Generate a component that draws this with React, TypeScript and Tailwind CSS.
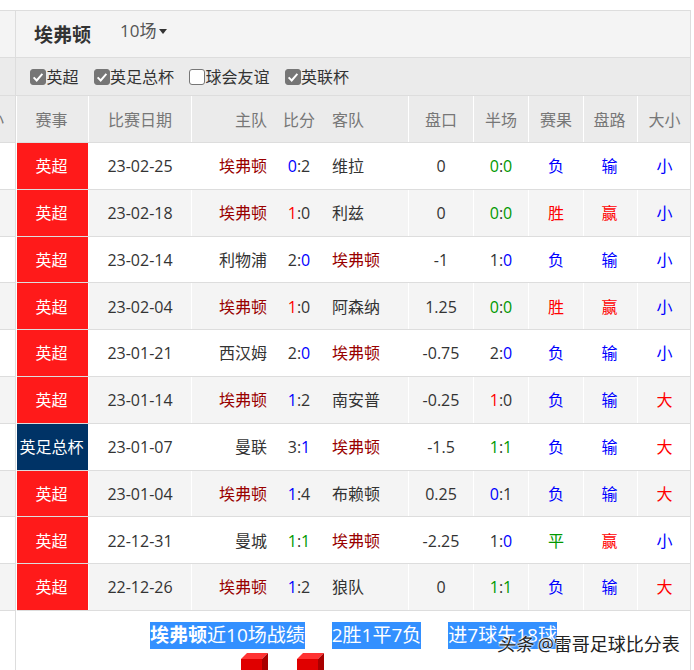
const FONT = "font-['Open_Sans','Noto_Sans_CJK_SC',sans-serif]";
const CELL = "flex items-center pt-[0.8px]";

type Part = { t: string; c?: string };
type Row = {
  league: string;
  date: string;
  home: string;
  score: Part[];
  away: string;
  line: string;
  half: Part[];
  result: Part;
  cover: Part;
  size: Part;
};

const RED = "text-[#ff0000]";
const BLUE = "text-[#0000ff]";
const GREEN = "text-[#009900]";
const TEAM = "埃弗顿";

const lose = (a: string, b: string, first = true): Part[] =>
  first
    ? [{ t: a, c: BLUE }, { t: ":" }, { t: b }]
    : [{ t: a }, { t: ":" }, { t: b, c: BLUE }];
const win = (a: string, b: string): Part[] => [{ t: a, c: RED }, { t: ":" }, { t: b }];
const draw = (a: string): Part[] => [{ t: a, c: GREEN }, { t: ":" }, { t: a, c: GREEN }];

const F: Part = { t: "负", c: BLUE };
const L: Part = { t: "输", c: BLUE };
const S: Part = { t: "小", c: BLUE };
const B: Part = { t: "大", c: RED };

const rows: Row[] = [
  { league: "英超", date: "23-02-25", home: TEAM, score: lose("0", "2"), away: "维拉", line: "0", half: draw("0"), result: F, cover: L, size: S },
  { league: "英超", date: "23-02-18", home: TEAM, score: win("1", "0"), away: "利兹", line: "0", half: draw("0"), result: { t: "胜", c: RED }, cover: { t: "赢", c: RED }, size: S },
  { league: "英超", date: "23-02-14", home: "利物浦", score: lose("2", "0", false), away: TEAM, line: "-1", half: lose("1", "0", false), result: F, cover: L, size: S },
  { league: "英超", date: "23-02-04", home: TEAM, score: win("1", "0"), away: "阿森纳", line: "1.25", half: draw("0"), result: { t: "胜", c: RED }, cover: { t: "赢", c: RED }, size: S },
  { league: "英超", date: "23-01-21", home: "西汉姆", score: lose("2", "0", false), away: TEAM, line: "-0.75", half: lose("2", "0", false), result: F, cover: L, size: S },
  { league: "英超", date: "23-01-14", home: TEAM, score: lose("1", "2"), away: "南安普", line: "-0.25", half: win("1", "0"), result: F, cover: L, size: B },
  { league: "英足总杯", date: "23-01-07", home: "曼联", score: lose("3", "1", false), away: TEAM, line: "-1.5", half: draw("1"), result: F, cover: L, size: B },
  { league: "英超", date: "23-01-04", home: TEAM, score: lose("1", "4"), away: "布赖顿", line: "0.25", half: lose("0", "1"), result: F, cover: L, size: B },
  { league: "英超", date: "22-12-31", home: "曼城", score: draw("1"), away: TEAM, line: "-2.25", half: lose("1", "0", false), result: { t: "平", c: GREEN }, cover: { t: "赢", c: RED }, size: S },
  { league: "英超", date: "22-12-26", home: TEAM, score: lose("1", "2"), away: "狼队", line: "0", half: draw("1"), result: F, cover: L, size: B },
];

const COLS = "grid grid-cols-[72px_103px_83px_48px_86px_65px_55px_55px_54px_53px]";

const Parts = ({ parts }: { parts: Part[] }) => (
  <>
    {parts.map((p, i) => (
      <span key={i} className={p.c}>
        {p.t}
      </span>
    ))}
  </>
);

const Check = ({ on, label }: { on: boolean; label: string }) => (
  <label className="flex items-center">
    <span
      className={`mr-[0.5px] flex h-4 w-4 items-center justify-center rounded-[3px] border ${
        on ? "border-[#767676] bg-[#767676]" : "border-[#767676] bg-white"
      }`}
    >
      {on && (
        <svg viewBox="0 0 16 16" className="h-[14px] w-[14px]">
          <path d="M3 8.5 L6.5 12 L13 4.5" fill="none" stroke="#fff" strokeWidth="2.2" />
        </svg>
      )}
    </span>
    {label}
  </label>
);

const Cube = () => (
  <svg viewBox="0 0 27 22" className="h-[22px] w-[27px]">
    <polygon points="0,6 6,0 27,0 21,6" fill="#ff3333" />
    <polygon points="21,6 27,0 27,22 21,22" fill="#a80000" />
    <rect x="0" y="6" width="21" height="16" fill="#e00000" />
  </svg>
);

const Head = ({ children, cls = "justify-center", line = true }: { children: string; cls?: string; line?: boolean }) => (
  <div className={`flex items-center pt-[2px] ${cls} ${line ? "border-r border-white" : ""}`}>{children}</div>
);

export default function App() {
  return (
    <div className={`${FONT} relative h-[670px] w-[694px] overflow-hidden bg-white pt-[10px] text-base text-[#333]`}>
      <div className="flex w-[691px] border-t border-[#dddddd]">
        {/* cut-off table on the left */}
        <div className="w-[15px] shrink-0">
          <div className="h-[46px] bg-[#f4f4f4]" />
          <div className="h-[39px] border-y border-[#dddddd] bg-[#ebebeb]" />
          <div className="flex h-[47px] items-center overflow-hidden border-b border-[#dddddd] bg-[#ebebeb] text-[#777]">
            <span className="-ml-[12px]">小</span>
          </div>
          {rows.map((r, i) => (
            <div key={r.date} className={`h-[46.8px] border-b border-[#dddddd] ${i % 2 ? "bg-[#f4f4f4]" : "bg-white"}`} />
          ))}
        </div>

        <div className="w-[676px] border-x border-[#dddddd] pl-px">
          {/* title bar */}
          <div className="-ml-px flex h-[46px] items-center bg-[#f4f4f4] pl-[18px]">
            <h2 className="mt-[2px] w-[86px] text-[19px] font-bold">埃弗顿</h2>
            <span className="mb-[6px] flex items-center text-[17px] text-[#555]">
              10场
              <span className="ml-[3px] h-0 w-0 border-x-[4.5px] border-t-[5px] border-x-transparent border-t-[#333]" />
            </span>
          </div>

          {/* competition filters */}
          <div className="-ml-px flex h-[39px] items-center gap-[15px] border-y border-[#dddddd] bg-[#ebebeb] pl-[14px] text-[#333]">
            <Check on label="英超" />
            <Check on label="英足总杯" />
            <Check on={false} label="球会友谊" />
            <Check on label="英联杯" />
          </div>

          {/* table head */}
          <div className={`${COLS} h-[47px] border-b border-[#dddddd] bg-[#ebebeb] text-[#777]`}>
            <Head cls="justify-center pr-[2px]">赛事</Head>
            <Head>比赛日期</Head>
            <Head cls="justify-end pr-2" line={false}>主队</Head>
            <Head line={false}>比分</Head>
            <Head cls="justify-start pl-[9px]">客队</Head>
            <Head>盘口</Head>
            <Head>半场</Head>
            <Head>赛果</Head>
            <Head cls="justify-center pr-[2px]">盘路</Head>
            <Head line={false}>大小</Head>
          </div>

          {/* match rows */}
          {rows.map((r, i) => (
            <div
              key={r.date}
              className={`${COLS} h-[46.8px] border-b border-[#dddddd] ${i % 2 ? "bg-[#f4f4f4]" : "bg-white"}`}
            >
              <div
                className={`${CELL} justify-center border-r border-white pr-[2px] text-white ${
                  r.league === "英超" ? "bg-[#ff1a1a]" : "bg-[#003366]"
                }`}
              >
                {r.league}
              </div>
              <div className={`${CELL} justify-center border-r border-white`}>{r.date}</div>
              <div className={`${CELL} justify-end pr-2 ${r.home === TEAM ? "text-[#990000]" : ""}`}>{r.home}</div>
              <div className={`${CELL} justify-center`}>
                <Parts parts={r.score} />
              </div>
              <div className={`${CELL} border-r border-white pl-[9px] ${r.away === TEAM ? "text-[#990000]" : ""}`}>{r.away}</div>
              <div className={`${CELL} justify-center border-r border-white`}>{r.line}</div>
              <div className={`${CELL} justify-center border-r border-white`}>
                <Parts parts={r.half} />
              </div>
              <div className={`${CELL} justify-center border-r border-white ${r.result.c}`}>{r.result.t}</div>
              <div className={`${CELL} justify-center border-r border-white pr-[2px] ${r.cover.c}`}>{r.cover.t}</div>
              <div className={`${CELL} justify-center ${r.size.c}`}>{r.size.t}</div>
            </div>
          ))}

          {/* summary, selected text */}
          <div className="flex pl-[133px] pt-[11px] text-[19px] leading-[27px] text-white">
            <span className="bg-[#3390ff]">
              <b>埃弗顿</b>近10场战绩
            </span>
            <span className="ml-[27px] bg-[#3390ff]">2胜1平7负</span>
            <span className="ml-[27px] bg-[#3390ff]">进7球失18球</span>
          </div>
          <div className="mt-1 flex gap-[29px] pl-[224px]">
            <Cube />
            <Cube />
          </div>
        </div>
      </div>

      {/* watermark */}
      <div className="absolute left-[497px] top-[632px] text-lg leading-[24px] text-[#222] [text-shadow:0_0_2px_#fff,0_0_2px_#fff,0_0_2px_#fff]">
        <span className="italic">头条</span> @雷哥足球比分表
      </div>
    </div>
  );
}
